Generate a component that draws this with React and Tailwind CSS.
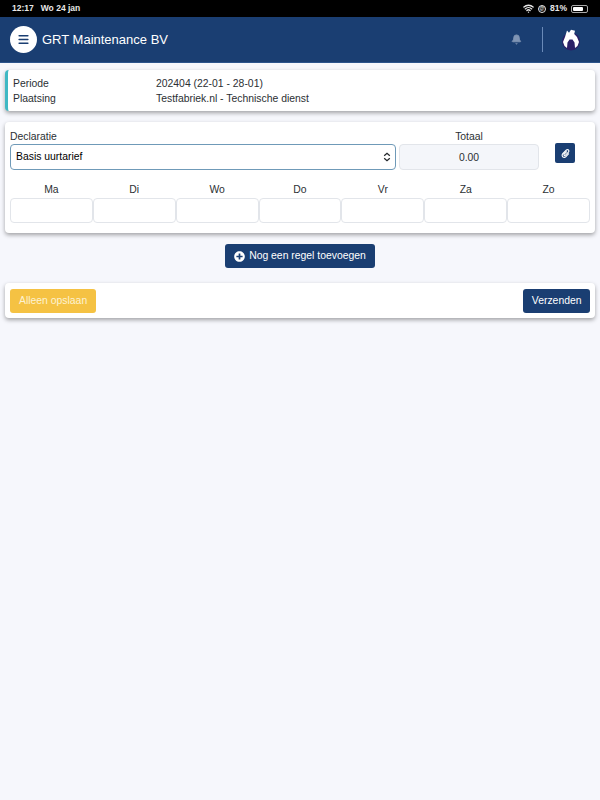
import React from "react";
import { Bell, Menu, Wifi } from "lucide-react";
import { FaPaperclip, FaPlusCircle } from "react-icons/fa";

const days = ["Ma", "Di", "Wo", "Do", "Vr", "Za", "Zo"];
const cardShadow = "shadow-[0_2px_4px_rgba(0,0,0,0.35)]";

function Flame() {
  return (
    <svg width="20" height="22" viewBox="0 0 20 22" aria-hidden="true">
      <circle cx="10" cy="12.5" r="9" fill="#2a1f66" />
      <path
        d="M6 1.5 L8 3.8 L10 0.8 L14 1.8 L13.2 5 L16 8 L18 13 L16.5 17 L14 19 L13.5 13.5 L11.5 10.5 L8.5 10.5 L6.5 13.5 L6 19 L3.5 17 L2 13 L4 8 Z"
        fill="#fff"
      />
    </svg>
  );
}

export default function App() {
  return (
    <div className="min-h-[800px] bg-[#f6f7fc] font-['Liberation_Sans',Arial,sans-serif] text-[10.4px] text-[#2b2f33]">
      <div className="flex h-[17px] items-center justify-between bg-black pl-3 pr-[12px] text-[8.5px] font-bold text-[#e8e8e8]">
        <div className="flex gap-[7px]">
          <span>12:17</span>
          <span>Wo 24 jan</span>
        </div>
        <div className="flex items-center gap-[4px]">
          <Wifi size={11} strokeWidth={3} />
          <span className="flex h-[8px] w-[8px] items-center justify-center rounded-full border border-[#e8e8e8] text-[5px] leading-none">@</span>
          <span>81%</span>
          <span className="flex h-[8px] w-[17px] items-center rounded-[2px] border border-[#aaa] p-px">
            <span className="h-full w-[80%] rounded-[1px] bg-white" />
          </span>
        </div>
      </div>

      <header className="flex h-[46px] items-center justify-between border-b border-[#2c548c] bg-[#1a3e72] pl-[10px] pr-[19px]">
        <div className="flex items-center gap-[5px]">
          <div className="flex h-[27px] w-[27px] items-center justify-center rounded-full bg-white">
            <Menu size={13} strokeWidth={3} className="text-[#1a3e72]" />
          </div>
          <span className="text-[13px] text-white">GRT Maintenance BV</span>
        </div>
        <div className="flex items-center">
          <Bell size={11} fill="#7f94b4" stroke="#7f94b4" />
          <div className="ml-[20px] mr-[18px] h-[25px] w-px bg-[#6a8ab8]" />
          <Flame />
        </div>
      </header>

      <div className="flex flex-col px-[5px] pt-[7px]">
        <section className={`flex flex-col gap-[1px] rounded-[4px] border-l-[3px] border-[#3fb8c4] bg-white pb-[5px] pl-[5px] pt-[7px] leading-[14px] ${cardShadow}`}>
          <div className="flex">
            <span className="w-[143px]">Periode</span>
            <span>202404 (22-01 - 28-01)</span>
          </div>
          <div className="flex">
            <span className="w-[143px]">Plaatsing</span>
            <span>Testfabriek.nl - Technische dienst</span>
          </div>
        </section>

        <section className={`mt-[11px] rounded-[4px] bg-white px-[5px] pb-[10px] pt-[8px] ${cardShadow}`}>
          <div className="flex items-start">
            <div className="flex w-[386px] flex-col">
              <span className="leading-[14px]">Declaratie</span>
              <div className="flex h-[26px] items-center justify-between rounded-[4px] border border-[#6f9ab8] pl-[5px] pr-[4px] text-black">
                <span>Basis uurtarief</span>
                <svg width="8" height="10" viewBox="0 0 8 10" fill="none" stroke="#212529" strokeWidth="1.2" aria-hidden="true">
                  <path d="M1.2 3.8 L4 1.2 L6.8 3.8 M1.2 6.2 L4 8.8 L6.8 6.2" />
                </svg>
              </div>
            </div>
            <div className="ml-[3px] flex w-[140px] flex-col">
              <span className="text-center leading-[14px]">Totaal</span>
              <div className="flex h-[26px] items-center justify-center rounded-[4px] border border-[#e2e5ea] bg-[#f4f6fa] pt-px">0.00</div>
            </div>
            <div className="ml-[16px] mt-[13px] flex h-[20px] w-[20px] items-center justify-center rounded-[2px] bg-[#1a3e72]">
              <FaPaperclip size={9} className="text-white" />
            </div>
          </div>
          <div className="mt-[12px] grid grid-cols-7">
            {days.map((d) => (
              <div key={d} className="flex flex-col items-center">
                <span className="leading-[16px]">{d}</span>
                <div className="h-[25px] w-full rounded-[4px] border border-[#e2e5ea] bg-white" />
              </div>
            ))}
          </div>
        </section>

        <div className="mt-[11px] flex justify-center">
          <button className="flex h-[24px] items-center gap-[4px] rounded-[3px] bg-[#1a3e72] px-[9px] text-[10.4px] text-white">
            <FaPlusCircle size={11} />
            Nog een regel toevoegen
          </button>
        </div>

        <section className={`mt-[15px] flex h-[35px] items-center justify-between rounded-[4px] bg-white px-[5px] ${cardShadow}`}>
          <button className="flex h-[24px] items-center rounded-[3px] bg-[#f5c243] px-[9px] text-[10.4px] text-[#fdf2d2]">Alleen opslaan</button>
          <button className="flex h-[24px] items-center rounded-[3px] bg-[#1a3e72] px-[8.5px] text-[10.4px] text-white">Verzenden</button>
        </section>
      </div>
    </div>
  );
}
